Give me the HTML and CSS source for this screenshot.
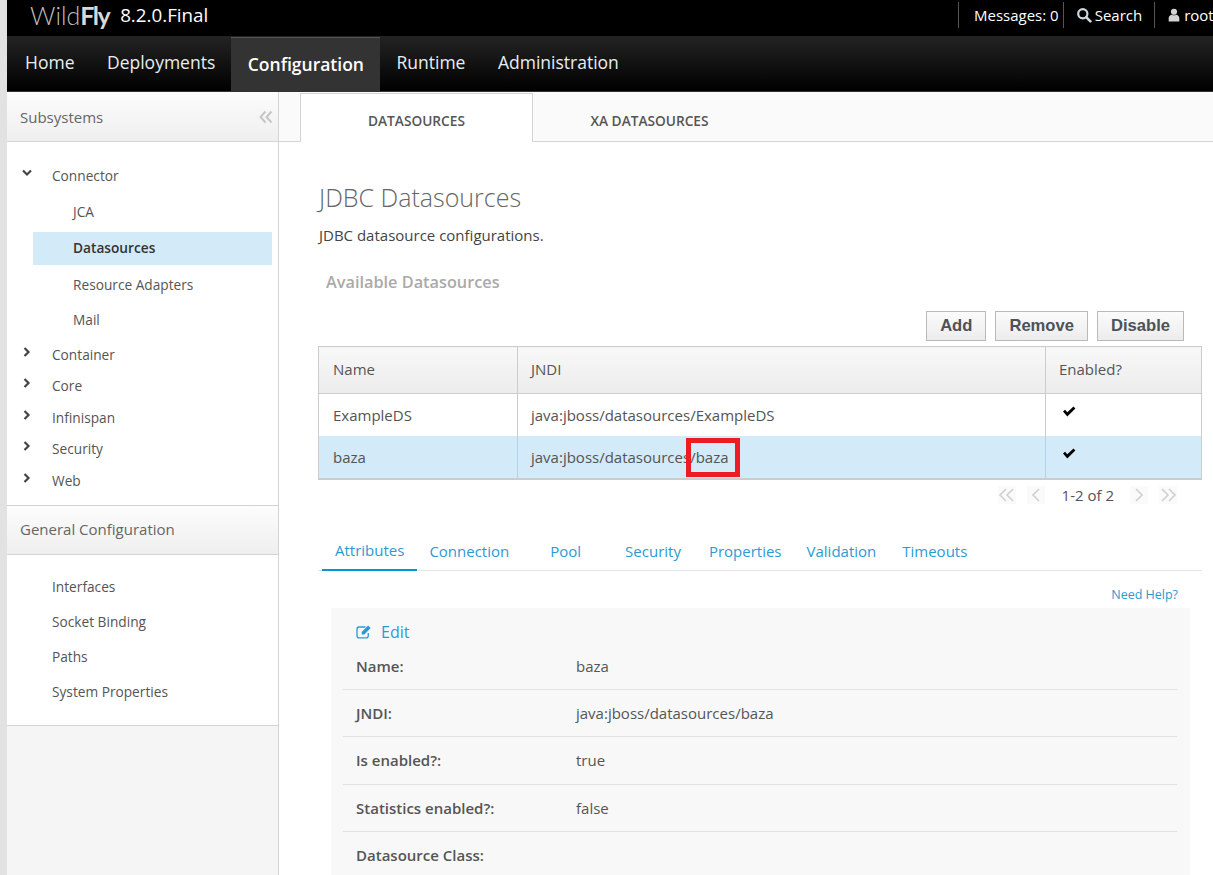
FILE: index.html
```html
<!DOCTYPE html>
<html lang="en">
<head>
    <meta charset="UTF-8">
    <meta name="viewport" content="width=device-width, initial-scale=1.0">
    <title>WildFly Management</title>
    <link rel="stylesheet" href="styles.css">
</head>
<body>
<div class="page">
    <header class="topbar">
        <div class="brand">
            <span class="logo"><span class="logo-thin">Wild</span><b class="logo-bold">Fly</b></span>
            <span class="version">8.2.0.Final</span>
        </div>
        <div class="top-tools">
            <span class="tool tool-msg">Messages: 0</span>
            <span class="tool tool-search">
                <svg class="tool-icon" viewBox="0 0 16 16"><circle cx="6.8" cy="6.8" r="4.6" fill="none" stroke="#cfd6dc" stroke-width="2.2"/><path d="M10.2 10.2L14.4 14.4" stroke="#cfd6dc" stroke-width="2.6" stroke-linecap="round"/></svg>
                Search
            </span>
            <span class="tool tool-user">
                <svg class="tool-icon user-icon" viewBox="0 0 14 16"><circle cx="7" cy="4.2" r="3.6" fill="#d4d4d4"/><path d="M0.8 15.5V11.5C0.8 9 3 7.8 4.4 7.6C5.6 8.6 8.4 8.6 9.6 7.6C11 7.8 13.2 9 13.2 11.5V15.5Z" fill="#d4d4d4"/></svg>
                root
            </span>
        </div>
    </header>

    <nav class="mainnav">
        <a class="nav-item">Home</a>
        <a class="nav-item">Deployments</a>
        <a class="nav-item nav-active">Configuration</a>
        <a class="nav-item">Runtime</a>
        <a class="nav-item">Administration</a>
    </nav>

    <div class="content">
        <aside class="sidebar">
            <div class="side-head">
                <span>Subsystems</span>
                <svg class="collapse" viewBox="0 0 14 14"><path d="M6.5 1.5L1.5 7L6.5 12.5M12.5 1.5L7.5 7L12.5 12.5" fill="none" stroke="#c6c6c6" stroke-width="2"/></svg>
            </div>
            <ul class="tree">
                <li class="tree-parent tree-first">
                    <svg class="arrow" viewBox="0 0 10 10"><path d="M1 2.5L5 6.5L9 2.5" fill="none" stroke="#444" stroke-width="2.2"/></svg>
                    Connector
                </li>
                <li class="tree-child child-jca">JCA</li>
                <li class="tree-child tree-selected">Datasources</li>
                <li class="tree-child child-ra">Resource Adapters</li>
                <li class="tree-child child-mail">Mail</li>
                <li class="tree-parent parent-container">
                    <svg class="arrow" viewBox="0 0 10 10"><path d="M2.5 1L6.5 5L2.5 9" fill="none" stroke="#444" stroke-width="2.2"/></svg>
                    Container
                </li>
                <li class="tree-parent">
                    <svg class="arrow" viewBox="0 0 10 10"><path d="M2.5 1L6.5 5L2.5 9" fill="none" stroke="#444" stroke-width="2.2"/></svg>
                    Core
                </li>
                <li class="tree-parent">
                    <svg class="arrow" viewBox="0 0 10 10"><path d="M2.5 1L6.5 5L2.5 9" fill="none" stroke="#444" stroke-width="2.2"/></svg>
                    Infinispan
                </li>
                <li class="tree-parent">
                    <svg class="arrow" viewBox="0 0 10 10"><path d="M2.5 1L6.5 5L2.5 9" fill="none" stroke="#444" stroke-width="2.2"/></svg>
                    Security
                </li>
                <li class="tree-parent">
                    <svg class="arrow" viewBox="0 0 10 10"><path d="M2.5 1L6.5 5L2.5 9" fill="none" stroke="#444" stroke-width="2.2"/></svg>
                    Web
                </li>
            </ul>
            <div class="side-head side-head-general">General Configuration</div>
            <ul class="plain-list">
                <li>Interfaces</li>
                <li>Socket Binding</li>
                <li>Paths</li>
                <li>System Properties</li>
            </ul>
        </aside>

        <main class="main">
            <div class="page-tabs">
                <a class="page-tab page-tab-on">DATASOURCES</a>
                <a class="page-tab">XA DATASOURCES</a>
            </div>

            <div class="body-wrap">
                <h1 class="title">JDBC Datasources</h1>
                <p class="desc">JDBC datasource configurations.</p>
                <h2 class="subtitle">Available Datasources</h2>

                <div class="btn-row">
                    <button class="btn">Add</button>
                    <button class="btn">Remove</button>
                    <button class="btn">Disable</button>
                </div>

                <table class="grid">
                    <thead>
                        <tr>
                            <th class="col-name">Name</th>
                            <th class="col-jndi">JNDI</th>
                            <th>Enabled?</th>
                        </tr>
                    </thead>
                    <tbody>
                        <tr class="row-first">
                            <td>ExampleDS</td>
                            <td>java:jboss/datasources/ExampleDS</td>
                            <td><svg class="check" viewBox="0 0 14 11"><path d="M1 5.5L3 3.8L5.3 6.2L11.5 0.6L13.4 2.4L5.3 10.6Z" fill="#000"/></svg></td>
                        </tr>
                        <tr class="row-selected">
                            <td>baza</td>
                            <td class="cell-mark">java:jboss/datasources/baza<span class="redbox"></span></td>
                            <td><svg class="check" viewBox="0 0 14 11"><path d="M1 5.5L3 3.8L5.3 6.2L11.5 0.6L13.4 2.4L5.3 10.6Z" fill="#000"/></svg></td>
                        </tr>
                    </tbody>
                </table>

                <div class="pager">
                    <span class="pg"><svg viewBox="0 0 18 16"><path d="M8 2L2 8L8 14M15 2L9 8L15 14" fill="none" stroke="#d0d0d0" stroke-width="1.6"/></svg></span>
                    <span class="pg pg-one"><svg viewBox="0 0 18 16"><path d="M12 2L6 8L12 14" fill="none" stroke="#d0d0d0" stroke-width="1.6"/></svg></span>
                    <span class="pg-text">1-2 of 2</span>
                    <span class="pg pg-one"><svg viewBox="0 0 18 16"><path d="M6 2L12 8L6 14" fill="none" stroke="#d0d0d0" stroke-width="1.6"/></svg></span>
                    <span class="pg"><svg viewBox="0 0 18 16"><path d="M3 2L9 8L3 14M10 2L16 8L10 14" fill="none" stroke="#d0d0d0" stroke-width="1.6"/></svg></span>
                </div>

                <div class="sub-tabs">
                    <a class="sub-tab sub-tab-on tab-attr">Attributes</a>
                    <a class="sub-tab tab-conn">Connection</a>
                    <a class="sub-tab tab-pool">Pool</a>
                    <a class="sub-tab tab-sec">Security</a>
                    <a class="sub-tab tab-prop">Properties</a>
                    <a class="sub-tab tab-val">Validation</a>
                    <a class="sub-tab tab-time">Timeouts</a>
                </div>

                <div class="help-row"><a class="help">Need Help?</a></div>

                <section class="panel">
                    <a class="edit">
                        <svg class="edit-icon" viewBox="0 0 18 16"><path d="M13 9.5V12.5C13 13.9 12 14.8 10.7 14.8H3.3C2 14.8 1 13.9 1 12.5V5.5C1 4.1 2 3.2 3.3 3.2H10" fill="none" stroke="#2b9ad4" stroke-width="1.4"/><path d="M6 8.5L12.8 1.6L15.6 4.2L8.8 11.2H6Z" fill="#2b9ad4"/></svg>
                        Edit
                    </a>
                    <div class="attr attr-first"><span class="attr-key">Name:</span><span class="attr-val">baza</span></div>
                    <div class="attr"><span class="attr-key">JNDI:</span><span class="attr-val">java:jboss/datasources/baza</span></div>
                    <div class="attr"><span class="attr-key">Is enabled?:</span><span class="attr-val">true</span></div>
                    <div class="attr"><span class="attr-key">Statistics enabled?:</span><span class="attr-val">false</span></div>
                    <div class="attr"><span class="attr-key">Datasource Class:</span><span class="attr-val"></span></div>
                </section>
            </div>
        </main>
    </div>
</div>
</body>
</html>
```

FILE: styles.css
```css
/* page frame */
html, body {
    margin: 0;
    height: 875px;
    overflow: hidden;
}

body {
    background-color: #e2e2e2;
    font-family: 'Open Sans', sans-serif;
    font-size: 15px;
    color: #545454;
}

.page {
    margin-left: 7px;
    height: 875px;
    overflow: hidden;
    background-color: #fff;
}

/* top black bar */
.topbar {
    height: 36px;
    background-color: #000;
    display: flex;
    justify-content: space-between;
    color: #fff;
}

.brand {
    display: flex;
    align-items: center;
    height: 30px;
    padding-left: 23px;
}

.logo {
    font-family: 'Lato', sans-serif;
    font-size: 25px;
    line-height: 30px;
    margin-right: 11px;
    white-space: nowrap;
}

.logo-thin {
    font-weight: 300;
    color: #bdbdbd;
}

.logo-bold {
    font-weight: 700;
    color: #d8d8d8;
    letter-spacing: -1.5px;
}

.version {
    font-size: 18.8px;
}

.top-tools {
    display: flex;
    white-space: nowrap;
    width: 255px;
    flex-shrink: 0;
    font-size: 15px;
}

.tool {
    display: flex;
    align-items: center;
    height: 26px;
    margin-top: 2px;
    border-left: 1px solid #555;
}

.tool-msg {
    padding: 0 4px 0 15px;
}

.tool-search {
    padding: 0 12px;
}

.tool-user {
    padding-left: 13px;
}

.tool-icon {
    width: 16px;
    height: 16px;
    margin-right: 3px;
}

.user-icon {
    width: 12px;
    height: 14px;
    margin-right: 4px;
}

/* main navigation */
.mainnav {
    height: 55px;
    display: flex;
    background: linear-gradient(#232323, #000);
    border-top: 1px solid #222;
    box-sizing: border-box;
}

.nav-item {
    padding: 0 16px 0 18px;
    line-height: 50px;
    font-size: 17.5px;
    color: #e8eef2;
    white-space: nowrap;
}

.nav-active {
    background-color: #333;
    border-top: 1px solid #555;
    font-weight: 600;
    color: #fff;
    line-height: 52px;
    padding: 0 16px 0 17px;
}

.nav-item + .nav-item {
    padding-left: 16.5px;
}

/* two columns */
.content {
    display: flex;
    height: 784px;
    border-top: 1px solid #333;
    box-sizing: border-box;
}

.sidebar {
    width: 272px;
    flex-shrink: 0;
    box-sizing: border-box;
    background-color: #f5f5f5;
    border-right: 1px solid #d4d4d4;
}

.side-head {
    height: 50px;
    box-sizing: border-box;
    padding: 0 5px 0 13px;
    display: flex;
    align-items: center;
    justify-content: space-between;
    background: linear-gradient(#fcfcfc, #efefef);
    border-bottom: 1px solid #d4d4d4;
    color: #666;
}

.collapse {
    width: 14px;
    height: 14px;
}

.side-head-general {
    border-top: 1px solid #d4d4d4;
    height: 50px;
    padding-bottom: 2px;
}

/* subsystem tree */
.tree, .plain-list {
    list-style: none;
    margin: 0;
    padding: 0;
    background-color: #fff;
    font-size: 13.7px;
}

.tree {
    padding-top: 18px;
    height: 363px;
    box-sizing: border-box;
}

.tree-parent {
    height: 31.5px;
    line-height: 31px;
    padding-left: 45px;
    position: relative;
    color: #555;
}

.tree-first {
    margin-bottom: 3px;
}

.arrow {
    position: absolute;
    left: 15px;
    top: 8px;
    width: 10px;
    height: 10px;
}

.tree-child {
    height: 33px;
    line-height: 33px;
    margin: 0 6px 3px 26px;
    padding-left: 40px;
    color: #555;
}

.child-jca {
    margin-bottom: 4px;
}

.tree-selected {
    background-color: #d3eaf8;
    color: #333;
    font-weight: 600;
    line-height: 31px;
    margin-bottom: 3px;
}

.child-ra, .child-mail {
    margin-bottom: 2px;
}

.parent-container {
    margin-top: 3px;
}

.plain-list {
    padding: 14px 0 16px 45px;
    border-bottom: 1px solid #d4d4d4;
}

.plain-list li {
    height: 35px;
    line-height: 35px;
}

/* right part */
.main {
    flex: 1;
    min-width: 0;
}

.page-tabs {
    height: 50px;
    display: flex;
    padding-left: 21px;
    background-color: #fafafa;
    border-bottom: 1px solid #d4d4d4;
    box-sizing: border-box;
}

.page-tab {
    width: 233px;
    box-sizing: border-box;
    text-align: center;
    font-size: 13.7px;
    font-weight: 600;
    line-height: 57px;
    color: #555;
}

.page-tab-on {
    height: 49px;
    margin-top: 1px;
    background-color: #fff;
    border: 1px solid #d4d4d4;
    border-bottom: none;
    line-height: 53px;
}

.body-wrap {
    padding: 37px 11px 0 39px;
}

.title {
    margin: 0 0 0 1px;
    font-size: 25px;
    font-weight: 300;
    line-height: 36px;
    color: #666;
}

.desc {
    margin: 10px 0 0 1px;
    line-height: 20px;
    color: #444;
}

.subtitle {
    margin: 25px 0 0 8px;
    font-size: 16.3px;
    font-weight: 600;
    line-height: 24px;
    color: #aaa;
}

.btn-row {
    display: flex;
    justify-content: flex-end;
    gap: 9px;
    margin-top: 17px;
    padding-right: 18px;
}

.btn {
    height: 30px;
    padding: 0 13px;
    border: 1px solid #b9b9b9;
    background: linear-gradient(#fbfbfb, #ececec);
    font-family: 'Liberation Sans', Arial, sans-serif;
    font-size: 16.6px;
    font-weight: 700;
    color: #4d5258;
}

/* datasources table */
.grid {
    width: 884px;
    margin-top: 5px;
    border-collapse: collapse;
    table-layout: fixed;
    border: 1px solid #ccc;
    border-bottom-width: 2px;
}

.grid th {
    height: 47px;
    padding: 0 13px 2px;
    text-align: left;
    font-weight: 400;
    background: linear-gradient(#f8f8f8, #ececec);
    border: 1px solid #ccc;
    color: #555;
    box-sizing: border-box;
}

.grid td {
    height: 43px;
    padding: 0 13px;
    border-left: 1px solid #ccc;
    border-right: 1px solid #ccc;
    box-sizing: border-box;
}

.grid .row-first td {
    height: 42px;
}

.grid th:first-child, .grid td:first-child {
    padding-left: 14px;
}

.col-name {
    width: 199px;
}

.col-jndi {
    width: 528px;
}

.row-selected td {
    background-color: #d3eaf8;
}

.cell-mark {
    position: relative;
}

/* red marker drawn over the screenshot */
.redbox {
    position: absolute;
    left: 168px;
    top: 2px;
    width: 54px;
    height: 39px;
    box-sizing: border-box;
    border: 5px solid #ed1c24;
}

.check {
    width: 14px;
    height: 11px;
    display: block;
    margin: -6px 0 0 3px;
}

.pager {
    display: flex;
    align-items: center;
    justify-content: flex-end;
    gap: 11px;
    height: 30px;
    padding-right: 25px;
}

.pg {
    width: 18px;
    height: 18px;
    background-color: #fafafa;
}

.pg svg {
    display: block;
    width: 18px;
    height: 18px;
}

.pg-text {
    margin: 0 5px 0 6px;
}

/* attribute tabs */
.sub-tabs {
    display: flex;
    margin-top: 21px;
    height: 40px;
    border-bottom: 1px solid #e4e4e4;
    padding-left: 4px;
    width: 884px;
    box-sizing: border-box;
}

.sub-tab {
    color: #2b9ad4;
    line-height: 40px;
    white-space: nowrap;
}

.sub-tab-on {
    height: 40px;
    box-sizing: border-box;
    padding: 0 13px;
    line-height: 38px;
    border-bottom: 2px solid #0097d6;
}

.tab-conn { margin-left: 12px; }
.tab-pool { margin-left: 41px; }
.tab-sec { margin-left: 44px; }
.tab-prop { margin-left: 28px; }
.tab-val { margin-left: 25px; }
.tab-time { margin-left: 26px; }

.help-row {
    text-align: right;
    padding-right: 24px;
    width: 884px;
    box-sizing: border-box;
    line-height: 18px;
    margin-top: 13px;
}

.help {
    font-size: 12.5px;
    color: #2b9ad4;
}

/* detail panel */
.panel {
    margin: 4px 0 0 13px;
    width: 859px;
    box-sizing: border-box;
    background-color: #f8f8f8;
    padding: 12px 13px 0 12px;
}

.edit {
    display: flex;
    align-items: center;
    height: 24px;
    padding-left: 13px;
    font-size: 16px;
    color: #2b9ad4;
}

.edit-icon {
    width: 17px;
    height: 15px;
    margin-right: 8px;
}

.attr {
    display: flex;
    height: 47.5px;
    box-sizing: border-box;
    padding: 1px 0 0 13px;
    line-height: 44px;
    border-bottom: 1px solid #e2e2e2;
    color: #555;
}

.attr-first {
    height: 46px;
    padding-top: 0;
}

.attr-key {
    width: 220px;
    font-weight: 600;
}
```
